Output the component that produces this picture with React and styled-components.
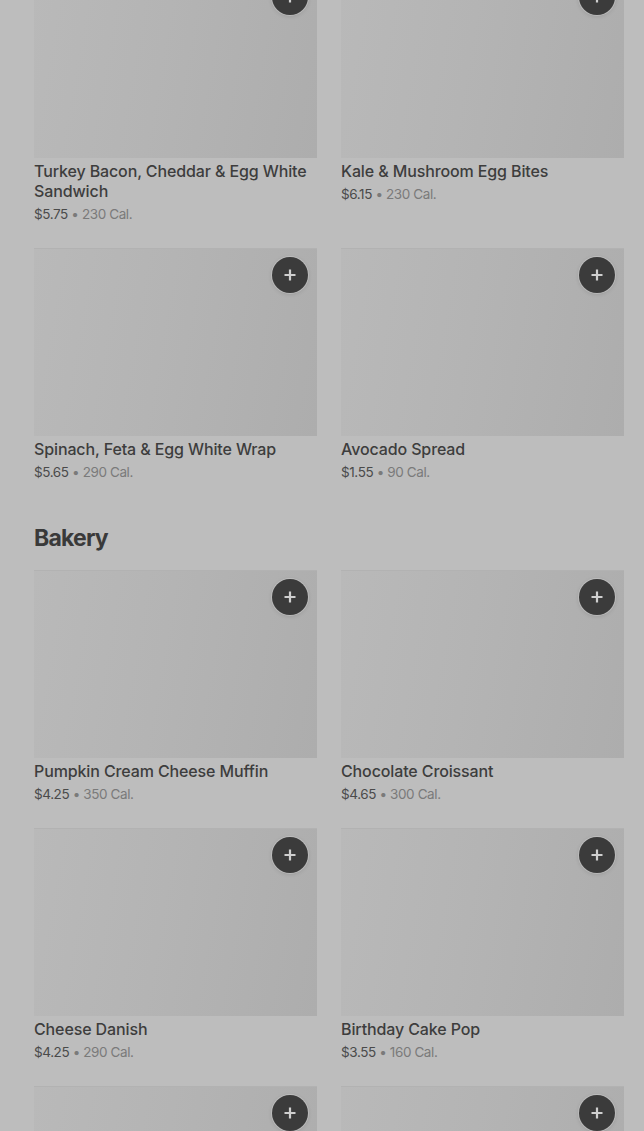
import React from "react";
import styled, { createGlobalStyle } from "styled-components";

const GlobalStyle = createGlobalStyle`
  html, body {
    margin: 0;
    padding: 0;
    background: #bdbdbd;
    font-family: Inter, "Noto Sans", sans-serif;
    overflow: hidden;
  }
`;

const Page = styled.div`
  width: 644px;
  height: 1131px;
  overflow: hidden;
  background: #bdbdbd;
  box-sizing: border-box;
  padding: 0 20px 0 34px;
`;

const Scroller = styled.div`
  margin-top: -30px;
`;

const Section = styled.section`
  & + & {
    margin-top: 40px;
  }
`;

const SectionTitle = styled.h2`
  margin: 0 0 16px 0;
  font-size: 23px;
  line-height: 32px;
  font-weight: 700;
  color: #3a3a3a;
  letter-spacing: -0.8px;
`;

const Grid = styled.div`
  display: grid;
  grid-template-columns: 283px 283px;
  column-gap: 24px;
  row-gap: 24px;
`;

const Card = styled.div`
  display: flex;
  flex-direction: column;
`;

const Thumb = styled.div`
  position: relative;
  height: 188px;
  background: linear-gradient(100deg, #b9b9b9 0%, #b4b4b4 45%, #adadad 100%);
  box-shadow: inset 0 1px 0 #b2b2b2;
`;

const AddButton = styled.button`
  position: absolute;
  top: 9px;
  right: 9px;
  width: 36px;
  height: 36px;
  border-radius: 50%;
  border: none;
  padding: 0;
  background: #3b3b3b;
  box-shadow: 0 0 0 1px rgba(210, 210, 210, 0.5), 0 1px 4px rgba(0, 0, 0, 0.15);
  display: flex;
  align-items: center;
  justify-content: center;
  cursor: pointer;
`;

const Name = styled.div`
  margin-top: 3px;
  font-size: 16px;
  line-height: 20px;
  font-weight: 500;
  color: #3d3d3d;
  letter-spacing: -0.12px;
`;

const Meta = styled.div`
  margin-top: 3px;
  font-size: 13.5px;
  line-height: 20px;
  color: #7a7a7a;
  letter-spacing: -0.4px;
`;

const Price = styled.span`
  color: #4a4a4a;
`;

const Plus = () => (
  <svg width="14" height="14" viewBox="0 0 14 14" fill="none">
    <path d="M7 1.5v11M1.5 7h11" stroke="#cfcfcf" strokeWidth="2.2" />
  </svg>
);

const sections = [
  {
    title: null,
    items: [
      { name: "Turkey Bacon, Cheddar & Egg White Sandwich", price: "$5.75", cal: "230 Cal." },
      { name: "Kale & Mushroom Egg Bites", price: "$6.15", cal: "230 Cal." },
      { name: "Spinach, Feta & Egg White Wrap", price: "$5.65", cal: "290 Cal." },
      { name: "Avocado Spread", price: "$1.55", cal: "90 Cal." },
    ],
  },
  {
    title: "Bakery",
    items: [
      { name: "Pumpkin Cream Cheese Muffin", price: "$4.25", cal: "350 Cal." },
      { name: "Chocolate Croissant", price: "$4.65", cal: "300 Cal." },
      { name: "Cheese Danish", price: "$4.25", cal: "290 Cal." },
      { name: "Birthday Cake Pop", price: "$3.55", cal: "160 Cal." },
      { name: null },
      { name: null },
    ],
  },
];

const MenuCard = ({ item }) => (
  <Card>
    <Thumb>
      <AddButton aria-label={item.name ? `Add ${item.name}` : "Add item"}>
        <Plus />
      </AddButton>
    </Thumb>
    {item.name && (
      <>
        <Name>{item.name}</Name>
        <Meta>
          <Price>{item.price}</Price> • {item.cal}
        </Meta>
      </>
    )}
  </Card>
);

export default function App() {
  return (
    <>
      <GlobalStyle />
      <Page>
        <Scroller>
          {sections.map((s, i) => (
            <Section key={i}>
              {s.title && <SectionTitle>{s.title}</SectionTitle>}
              <Grid>
                {s.items.map((item, j) => (
                  <MenuCard key={j} item={item} />
                ))}
              </Grid>
            </Section>
          ))}
        </Scroller>
      </Page>
    </>
  );
}
